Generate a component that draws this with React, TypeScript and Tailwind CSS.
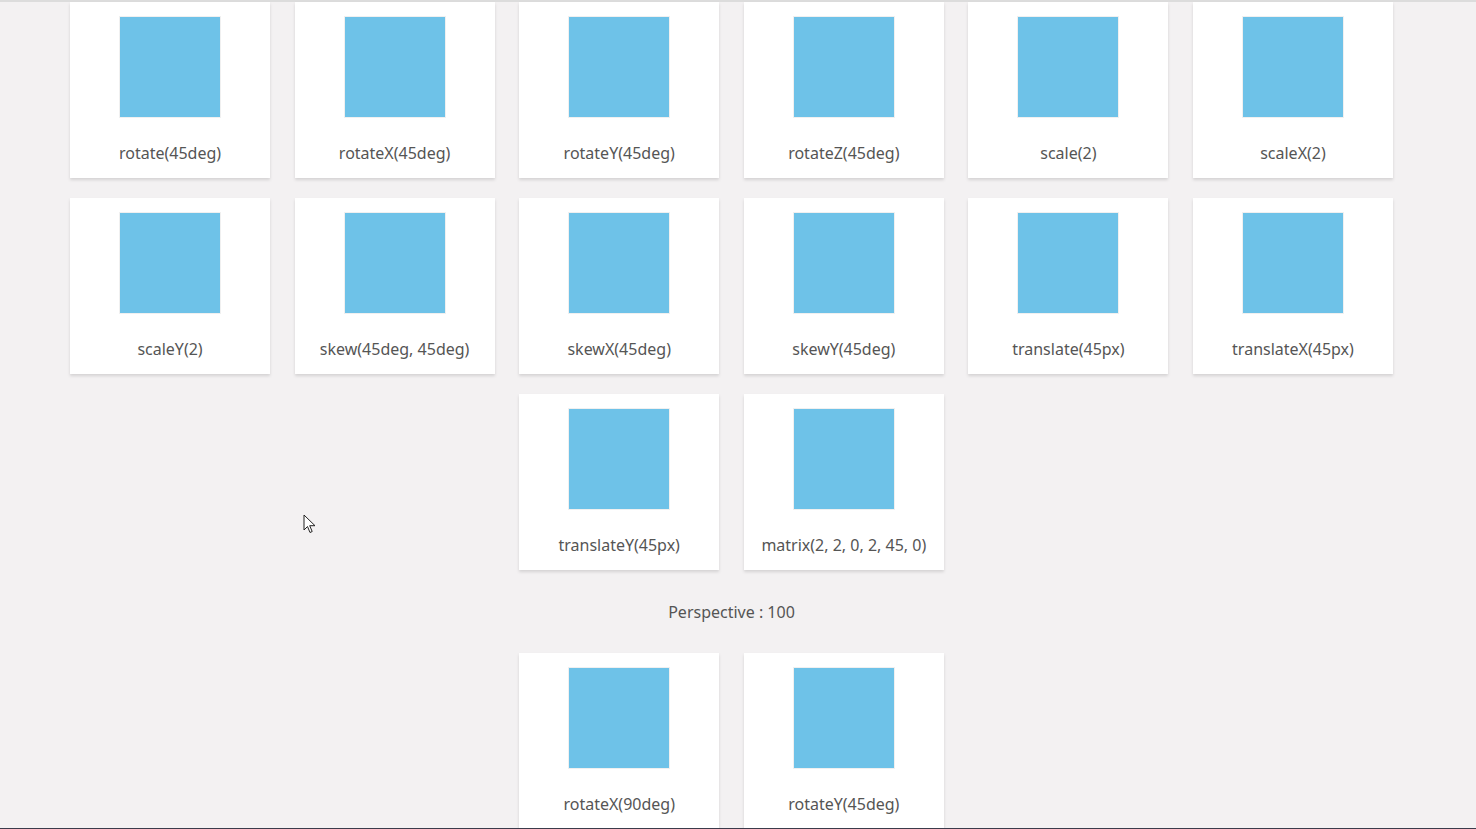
const rows: string[][] = [
  ["rotate(45deg)", "rotateX(45deg)", "rotateY(45deg)", "rotateZ(45deg)", "scale(2)", "scaleX(2)"],
  ["scaleY(2)", "skew(45deg, 45deg)", "skewX(45deg)", "skewY(45deg)", "translate(45px)", "translateX(45px)"],
  ["translateY(45px)", "matrix(2, 2, 0, 2, 45, 0)"],
];

const perspective = ["rotateX(90deg)", "rotateY(45deg)"];

function Card({ label }: { label: string }) {
  return (
    <div className="flex h-[176px] w-[200px] flex-col items-center bg-white pt-[15px] shadow-[0_2px_3px_rgba(0,0,0,0.13)]">
      <div className="h-[100px] w-[100px] bg-[#6ec2e8] ring-1 ring-[#f0f0f0]" />
      <p className="mt-[24px] text-[16px] leading-[24px] text-[#555]">{label}</p>
    </div>
  );
}

export default function App() {
  return (
    <div className="relative h-[829px] overflow-hidden bg-[#f3f1f2] font-['Noto_Sans',sans-serif]">
      <div className="h-[2px] bg-[#dcdcdc]" />
      <div className="w-[1463px]">
        <div className="flex flex-col gap-5">
          {rows.map((row, i) => (
            <div key={i} className="flex justify-center gap-x-[24.6px]">
              {row.map((label) => (
                <Card key={label} label={label} />
              ))}
            </div>
          ))}
        </div>
        <p className="pb-[30px] pt-[31px] text-center text-[16px] leading-[22px] text-[#555]">Perspective : 100</p>
        <div className="flex justify-center gap-x-[24.6px]">
          {perspective.map((label) => (
            <Card key={label} label={label} />
          ))}
        </div>
      </div>

      {/* mouse pointer left in the capture */}
      <svg className="absolute left-[303px] top-[514px]" width="13" height="20" viewBox="0 0 13 20" aria-hidden="true">
        <path d="M1 1v15l3.5-3.5 2.5 6 2.2-1-2.5-5.8H12L1 1Z" fill="#fff" stroke="#222" strokeWidth="1" strokeLinejoin="round" />
      </svg>
      <div className="absolute inset-x-0 bottom-0 h-px bg-[#3b3b4b]" />
    </div>
  );
}
